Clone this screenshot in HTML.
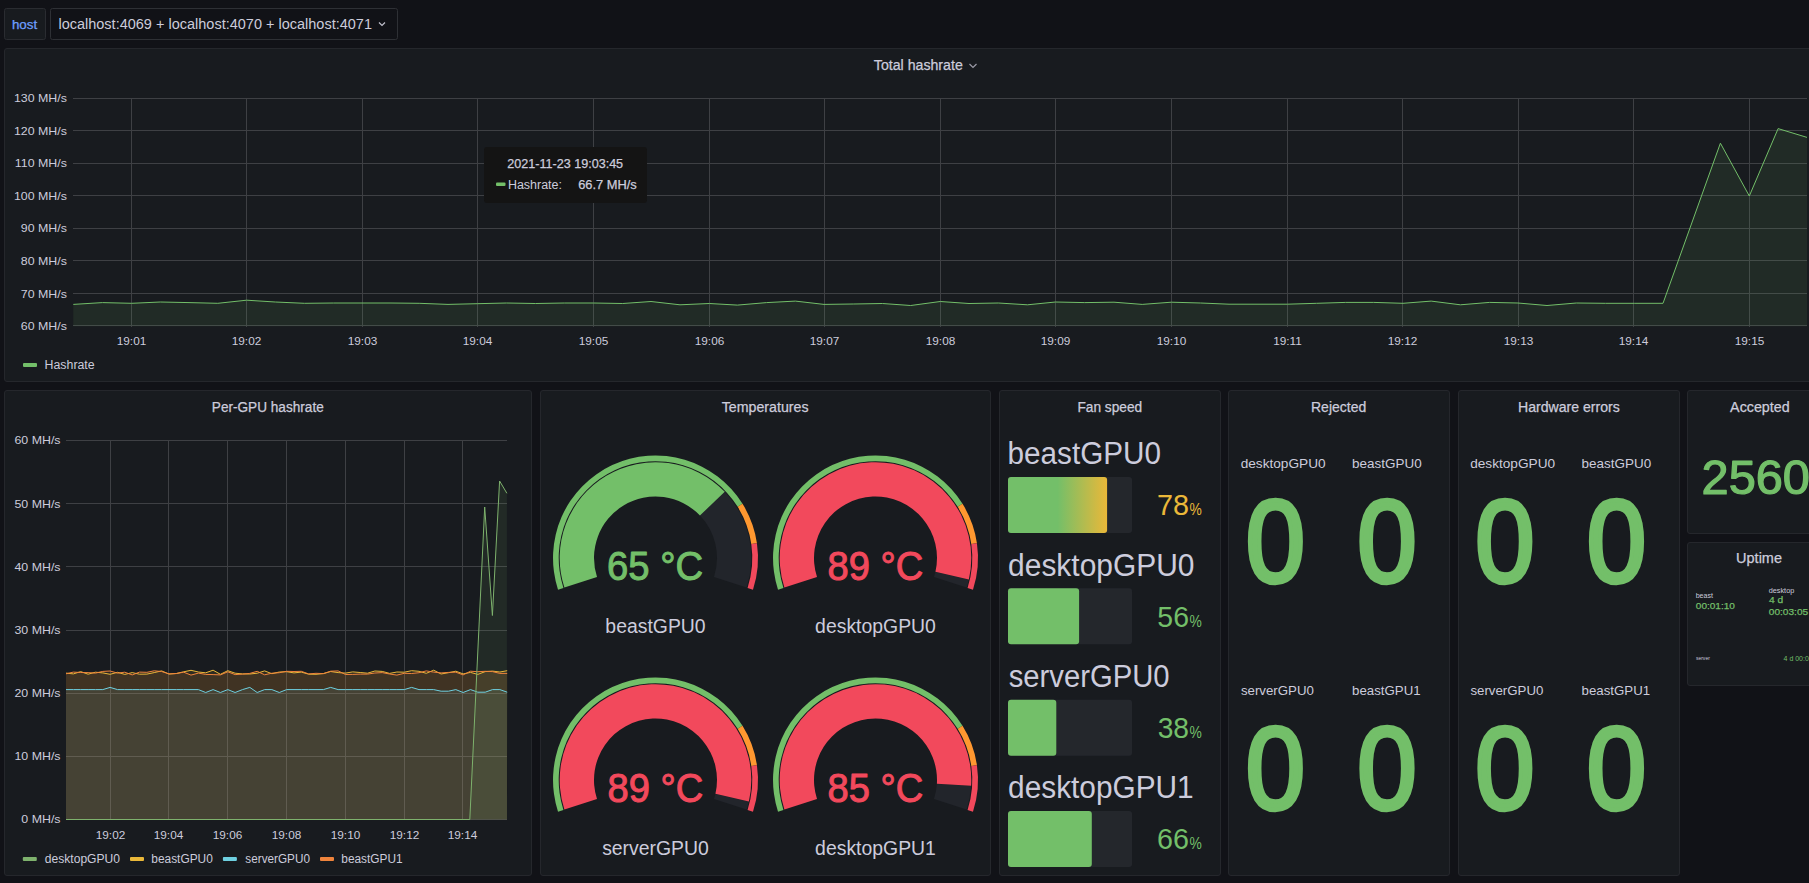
<!DOCTYPE html>
<html><head><meta charset="utf-8"><title>Grafana</title>
<style>html,body{margin:0;padding:0;background:#111217;overflow:hidden;width:1809px;height:883px}svg{display:block}text{font-family:"Liberation Sans", sans-serif}</style>
</head><body>
<svg width="1809" height="883" viewBox="0 0 1809 883">
<defs><linearGradient id="fg" x1="0" x2="1" y1="0" y2="0"><stop offset="0" stop-color="#73bf69"/><stop offset="0.5" stop-color="#73bf69"/><stop offset="1" stop-color="#eab839"/></linearGradient></defs>
<rect width="1809" height="883" fill="#111217"/>
<rect x="4.5" y="8.5" width="41" height="31" rx="2" fill="#181b1f" stroke="#2a2c31"/>
<rect x="50.5" y="8.5" width="347" height="31" rx="2" fill="#111217" stroke="#2e3035"/>
<polyline points="379,22.5 382,25.5 385,22.5" fill="none" stroke="#c0c0cc" stroke-width="1.2"/>
<rect x="4.5" y="48.5" width="1895.5" height="333.0" rx="2.5" fill="#181b1f" stroke="#25272c" stroke-width="1"/>
<polyline points="969.5,64 973,67.5 976.5,64" fill="none" stroke="#9a9aa6" stroke-width="1.2"/>
<line x1="73" y1="98.50" x2="1807" y2="98.50" stroke="#3e4044"/>
<line x1="73" y1="130.50" x2="1807" y2="130.50" stroke="#3e4044"/>
<line x1="73" y1="163.50" x2="1807" y2="163.50" stroke="#3e4044"/>
<line x1="73" y1="195.50" x2="1807" y2="195.50" stroke="#3e4044"/>
<line x1="73" y1="228.50" x2="1807" y2="228.50" stroke="#3e4044"/>
<line x1="73" y1="260.50" x2="1807" y2="260.50" stroke="#3e4044"/>
<line x1="73" y1="293.50" x2="1807" y2="293.50" stroke="#3e4044"/>
<line x1="73" y1="325.50" x2="1807" y2="325.50" stroke="#3e4044"/>
<line x1="131.50" y1="98" x2="131.50" y2="327" stroke="#3e4044"/>
<line x1="246.50" y1="98" x2="246.50" y2="327" stroke="#3e4044"/>
<line x1="362.50" y1="98" x2="362.50" y2="327" stroke="#3e4044"/>
<line x1="477.50" y1="98" x2="477.50" y2="327" stroke="#3e4044"/>
<line x1="593.50" y1="98" x2="593.50" y2="327" stroke="#3e4044"/>
<line x1="709.50" y1="98" x2="709.50" y2="327" stroke="#3e4044"/>
<line x1="824.50" y1="98" x2="824.50" y2="327" stroke="#3e4044"/>
<line x1="940.50" y1="98" x2="940.50" y2="327" stroke="#3e4044"/>
<line x1="1055.50" y1="98" x2="1055.50" y2="327" stroke="#3e4044"/>
<line x1="1171.50" y1="98" x2="1171.50" y2="327" stroke="#3e4044"/>
<line x1="1287.50" y1="98" x2="1287.50" y2="327" stroke="#3e4044"/>
<line x1="1402.50" y1="98" x2="1402.50" y2="327" stroke="#3e4044"/>
<line x1="1518.50" y1="98" x2="1518.50" y2="327" stroke="#3e4044"/>
<line x1="1633.50" y1="98" x2="1633.50" y2="327" stroke="#3e4044"/>
<line x1="1749.50" y1="98" x2="1749.50" y2="327" stroke="#3e4044"/>
<path d="M73.3,304.4 L102.5,302.6 L131.7,303.3 L160.3,302.0 L189.0,302.6 L217.8,303.3 L246.6,300.2 L275.3,302.0 L304.5,303.3 L333.7,303.0 L363.0,303.0 L391.0,303.0 L419.2,303.3 L448.0,304.4 L477.2,303.7 L506.4,303.0 L535.4,303.5 L564.3,303.0 L593.5,303.0 L622.7,303.5 L651.0,301.5 L680.0,304.8 L709.3,303.5 L737.4,305.1 L766.6,302.6 L795.4,301.1 L824.0,304.4 L853.2,304.0 L882.4,303.5 L910.7,305.5 L940.3,301.5 L969.0,303.5 L998.3,303.0 L1027.5,304.8 L1055.5,302.0 L1084.7,302.6 L1114.0,302.2 L1142.2,304.4 L1171.4,302.2 L1200.6,303.0 L1229.0,304.2 L1258.0,304.2 L1287.3,304.2 L1316.5,303.3 L1345.7,302.4 L1373.7,302.4 L1403.0,303.3 L1431.2,301.1 L1460.4,304.8 L1489.6,302.4 L1517.9,303.0 L1547.0,305.5 L1576.3,303.0 L1605.5,303.3 L1634.7,303.3 L1663.0,303.3 L1720.4,143.2 L1749.3,196.0 L1778.1,128.6 L1807.0,137.4 L1807,326.3 L73.3,326.3 Z" fill="#73bf69" fill-opacity="0.1"/>
<path d="M73.3,304.4 L102.5,302.6 L131.7,303.3 L160.3,302.0 L189.0,302.6 L217.8,303.3 L246.6,300.2 L275.3,302.0 L304.5,303.3 L333.7,303.0 L363.0,303.0 L391.0,303.0 L419.2,303.3 L448.0,304.4 L477.2,303.7 L506.4,303.0 L535.4,303.5 L564.3,303.0 L593.5,303.0 L622.7,303.5 L651.0,301.5 L680.0,304.8 L709.3,303.5 L737.4,305.1 L766.6,302.6 L795.4,301.1 L824.0,304.4 L853.2,304.0 L882.4,303.5 L910.7,305.5 L940.3,301.5 L969.0,303.5 L998.3,303.0 L1027.5,304.8 L1055.5,302.0 L1084.7,302.6 L1114.0,302.2 L1142.2,304.4 L1171.4,302.2 L1200.6,303.0 L1229.0,304.2 L1258.0,304.2 L1287.3,304.2 L1316.5,303.3 L1345.7,302.4 L1373.7,302.4 L1403.0,303.3 L1431.2,301.1 L1460.4,304.8 L1489.6,302.4 L1517.9,303.0 L1547.0,305.5 L1576.3,303.0 L1605.5,303.3 L1634.7,303.3 L1663.0,303.3 L1720.4,143.2 L1749.3,196.0 L1778.1,128.6 L1807.0,137.4" fill="none" stroke="#73bf69" stroke-width="1"/>
<rect x="23" y="363" width="14" height="4" rx="1" fill="#73bf69"/>
<rect x="484" y="147" width="163" height="56" rx="3" fill="#141414"/>
<rect x="496" y="182.5" width="9.5" height="3.5" rx="1" fill="#73bf69"/>
<rect x="4.5" y="390.5" width="527.0" height="485.0" rx="2.5" fill="#181b1f" stroke="#25272c" stroke-width="1"/>
<rect x="540.5" y="390.5" width="450.0" height="485.0" rx="2.5" fill="#181b1f" stroke="#25272c" stroke-width="1"/>
<rect x="999.5" y="390.5" width="221.0" height="485.0" rx="2.5" fill="#181b1f" stroke="#25272c" stroke-width="1"/>
<rect x="1228.5" y="390.5" width="221.0" height="485.0" rx="2.5" fill="#181b1f" stroke="#25272c" stroke-width="1"/>
<rect x="1458.5" y="390.5" width="221.0" height="485.0" rx="2.5" fill="#181b1f" stroke="#25272c" stroke-width="1"/>
<rect x="1687.5" y="390.5" width="212.5" height="143.0" rx="2.5" fill="#181b1f" stroke="#25272c" stroke-width="1"/>
<rect x="1687.5" y="542.5" width="212.5" height="143.0" rx="2.5" fill="#181b1f" stroke="#25272c" stroke-width="1"/>
<line x1="66" y1="440.50" x2="507" y2="440.50" stroke="#3e4044"/>
<line x1="66" y1="503.50" x2="507" y2="503.50" stroke="#3e4044"/>
<line x1="66" y1="566.50" x2="507" y2="566.50" stroke="#3e4044"/>
<line x1="66" y1="630.50" x2="507" y2="630.50" stroke="#3e4044"/>
<line x1="66" y1="693.50" x2="507" y2="693.50" stroke="#3e4044"/>
<line x1="66" y1="756.50" x2="507" y2="756.50" stroke="#3e4044"/>
<line x1="66" y1="819.50" x2="507" y2="819.50" stroke="#3e4044"/>
<line x1="110.50" y1="440" x2="110.50" y2="820" stroke="#3e4044"/>
<line x1="168.50" y1="440" x2="168.50" y2="820" stroke="#3e4044"/>
<line x1="227.50" y1="440" x2="227.50" y2="820" stroke="#3e4044"/>
<line x1="286.50" y1="440" x2="286.50" y2="820" stroke="#3e4044"/>
<line x1="345.50" y1="440" x2="345.50" y2="820" stroke="#3e4044"/>
<line x1="404.50" y1="440" x2="404.50" y2="820" stroke="#3e4044"/>
<line x1="462.50" y1="440" x2="462.50" y2="820" stroke="#3e4044"/>
<path d="M66.0,673.1 L73.4,673.9 L80.7,671.6 L88.1,674.2 L95.4,672.2 L102.8,672.9 L110.1,674.3 L117.5,672.3 L124.8,674.4 L132.2,672.6 L139.5,674.2 L146.9,674.1 L154.2,672.6 L161.6,670.9 L169.0,674.0 L176.3,673.5 L183.7,671.8 L191.0,670.3 L198.4,672.0 L205.7,672.8 L213.1,670.2 L220.4,674.3 L227.8,670.7 L235.1,673.2 L242.5,673.9 L249.8,674.0 L257.2,673.2 L264.6,670.9 L271.9,673.7 L279.3,672.0 L286.6,671.7 L294.0,672.9 L301.3,672.1 L308.7,674.2 L316.0,674.3 L323.4,673.6 L330.7,671.5 L338.1,672.6 L345.5,673.1 L352.8,671.9 L360.2,672.5 L367.5,673.2 L374.9,671.0 L382.2,671.4 L389.6,673.4 L396.9,672.0 L404.3,672.2 L411.6,670.7 L419.0,671.3 L426.3,673.3 L433.7,670.2 L441.1,674.0 L448.4,672.7 L455.8,671.2 L463.1,673.9 L470.5,672.4 L477.8,674.4 L485.2,671.6 L492.5,671.1 L499.9,672.0 L507.2,670.7 L507,819.5 L66,819.5 Z" fill="#eab839" fill-opacity="0.1"/>
<path d="M66.0,689.6 L73.4,689.6 L80.7,689.6 L88.1,689.6 L95.4,689.6 L102.8,689.6 L110.1,687.4 L117.5,689.6 L124.8,689.6 L132.2,689.6 L139.5,689.6 L146.9,689.6 L154.2,689.6 L161.6,689.6 L169.0,689.6 L176.3,689.6 L183.7,689.6 L191.0,689.6 L198.4,689.6 L205.7,692.5 L213.1,689.6 L220.4,692.5 L227.8,689.6 L235.1,692.5 L242.5,689.6 L249.8,687.4 L257.2,692.5 L264.6,689.6 L271.9,689.6 L279.3,692.5 L286.6,689.6 L294.0,689.6 L301.3,689.6 L308.7,689.6 L316.0,689.6 L323.4,689.6 L330.7,687.4 L338.1,689.6 L345.5,689.6 L352.8,689.6 L360.2,689.6 L367.5,689.6 L374.9,689.6 L382.2,689.6 L389.6,689.6 L396.9,689.6 L404.3,689.6 L411.6,687.4 L419.0,689.6 L426.3,689.6 L433.7,689.6 L441.1,691.2 L448.4,691.2 L455.8,689.6 L463.1,692.5 L470.5,689.6 L477.8,692.2 L485.2,692.2 L492.5,689.6 L499.9,689.6 L507.2,692.2 L507,819.5 L66,819.5 Z" fill="#6ed0e0" fill-opacity="0.1"/>
<path d="M66.0,673.8 L73.4,672.1 L80.7,672.5 L88.1,672.6 L95.4,673.1 L102.8,671.4 L110.1,671.0 L117.5,673.1 L124.8,672.2 L132.2,674.9 L139.5,672.1 L146.9,672.3 L154.2,670.8 L161.6,671.5 L169.0,673.9 L176.3,673.5 L183.7,672.2 L191.0,675.1 L198.4,673.1 L205.7,674.4 L213.1,674.6 L220.4,674.9 L227.8,671.8 L235.1,674.6 L242.5,674.1 L249.8,673.4 L257.2,671.3 L264.6,674.8 L271.9,673.2 L279.3,672.7 L286.6,671.3 L294.0,671.5 L301.3,671.3 L308.7,673.9 L316.0,673.3 L323.4,673.6 L330.7,671.2 L338.1,670.9 L345.5,674.5 L352.8,674.4 L360.2,674.1 L367.5,674.1 L374.9,673.0 L382.2,672.6 L389.6,674.0 L396.9,675.1 L404.3,673.3 L411.6,673.5 L419.0,672.7 L426.3,670.9 L433.7,672.1 L441.1,672.9 L448.4,672.4 L455.8,672.2 L463.1,674.9 L470.5,671.2 L477.8,671.7 L485.2,671.3 L492.5,671.6 L499.9,673.4 L507.2,673.4 L507,819.5 L66,819.5 Z" fill="#ef843c" fill-opacity="0.1"/>
<path d="M66.0,819.5 L469.8,819.5 L484.7,507.0 L492.4,615.5 L499.6,481.0 L506.9,493.3 L506.9,819.5 Z" fill="#7eb26d" fill-opacity="0.1"/>
<path d="M66.0,673.1 L73.4,673.9 L80.7,671.6 L88.1,674.2 L95.4,672.2 L102.8,672.9 L110.1,674.3 L117.5,672.3 L124.8,674.4 L132.2,672.6 L139.5,674.2 L146.9,674.1 L154.2,672.6 L161.6,670.9 L169.0,674.0 L176.3,673.5 L183.7,671.8 L191.0,670.3 L198.4,672.0 L205.7,672.8 L213.1,670.2 L220.4,674.3 L227.8,670.7 L235.1,673.2 L242.5,673.9 L249.8,674.0 L257.2,673.2 L264.6,670.9 L271.9,673.7 L279.3,672.0 L286.6,671.7 L294.0,672.9 L301.3,672.1 L308.7,674.2 L316.0,674.3 L323.4,673.6 L330.7,671.5 L338.1,672.6 L345.5,673.1 L352.8,671.9 L360.2,672.5 L367.5,673.2 L374.9,671.0 L382.2,671.4 L389.6,673.4 L396.9,672.0 L404.3,672.2 L411.6,670.7 L419.0,671.3 L426.3,673.3 L433.7,670.2 L441.1,674.0 L448.4,672.7 L455.8,671.2 L463.1,673.9 L470.5,672.4 L477.8,674.4 L485.2,671.6 L492.5,671.1 L499.9,672.0 L507.2,670.7" fill="none" stroke="#eab839" stroke-width="1"/>
<path d="M66.0,689.6 L73.4,689.6 L80.7,689.6 L88.1,689.6 L95.4,689.6 L102.8,689.6 L110.1,687.4 L117.5,689.6 L124.8,689.6 L132.2,689.6 L139.5,689.6 L146.9,689.6 L154.2,689.6 L161.6,689.6 L169.0,689.6 L176.3,689.6 L183.7,689.6 L191.0,689.6 L198.4,689.6 L205.7,692.5 L213.1,689.6 L220.4,692.5 L227.8,689.6 L235.1,692.5 L242.5,689.6 L249.8,687.4 L257.2,692.5 L264.6,689.6 L271.9,689.6 L279.3,692.5 L286.6,689.6 L294.0,689.6 L301.3,689.6 L308.7,689.6 L316.0,689.6 L323.4,689.6 L330.7,687.4 L338.1,689.6 L345.5,689.6 L352.8,689.6 L360.2,689.6 L367.5,689.6 L374.9,689.6 L382.2,689.6 L389.6,689.6 L396.9,689.6 L404.3,689.6 L411.6,687.4 L419.0,689.6 L426.3,689.6 L433.7,689.6 L441.1,691.2 L448.4,691.2 L455.8,689.6 L463.1,692.5 L470.5,689.6 L477.8,692.2 L485.2,692.2 L492.5,689.6 L499.9,689.6 L507.2,692.2" fill="none" stroke="#6ed0e0" stroke-width="1"/>
<path d="M66.0,673.8 L73.4,672.1 L80.7,672.5 L88.1,672.6 L95.4,673.1 L102.8,671.4 L110.1,671.0 L117.5,673.1 L124.8,672.2 L132.2,674.9 L139.5,672.1 L146.9,672.3 L154.2,670.8 L161.6,671.5 L169.0,673.9 L176.3,673.5 L183.7,672.2 L191.0,675.1 L198.4,673.1 L205.7,674.4 L213.1,674.6 L220.4,674.9 L227.8,671.8 L235.1,674.6 L242.5,674.1 L249.8,673.4 L257.2,671.3 L264.6,674.8 L271.9,673.2 L279.3,672.7 L286.6,671.3 L294.0,671.5 L301.3,671.3 L308.7,673.9 L316.0,673.3 L323.4,673.6 L330.7,671.2 L338.1,670.9 L345.5,674.5 L352.8,674.4 L360.2,674.1 L367.5,674.1 L374.9,673.0 L382.2,672.6 L389.6,674.0 L396.9,675.1 L404.3,673.3 L411.6,673.5 L419.0,672.7 L426.3,670.9 L433.7,672.1 L441.1,672.9 L448.4,672.4 L455.8,672.2 L463.1,674.9 L470.5,671.2 L477.8,671.7 L485.2,671.3 L492.5,671.6 L499.9,673.4 L507.2,673.4" fill="none" stroke="#ef843c" stroke-width="1"/>
<path d="M66.0,819.5 L469.8,819.5 L484.7,507.0 L492.4,615.5 L499.6,481.0 L506.9,493.3" fill="none" stroke="#7eb26d" stroke-width="1"/>
<rect x="22.8" y="857" width="14" height="4" rx="1" fill="#7eb26d"/>
<rect x="130" y="857" width="14" height="4" rx="1" fill="#eab839"/>
<rect x="222.9" y="857" width="14" height="4" rx="1" fill="#6ed0e0"/>
<rect x="320" y="857" width="14" height="4" rx="1" fill="#ef843c"/>
<path d="M558.02,589.67 A102.5,102.5 0 0 1 742.52,503.84 L737.68,506.85 A96.8,96.8 0 0 0 563.44,587.91 Z" fill="#73bf69"/>
<path d="M742.52,503.84 A102.5,102.5 0 0 1 756.93,543.20 L751.29,544.03 A96.8,96.8 0 0 0 737.68,506.85 Z" fill="#ff9830"/>
<path d="M756.93,543.20 A102.5,102.5 0 0 1 752.98,589.67 L747.56,587.91 A96.8,96.8 0 0 0 751.29,544.03 Z" fill="#f2495c"/>
<path d="M724.76,491.81 A95.8,95.8 0 0 1 746.61,587.60 L713.99,577.00 A61.5,61.5 0 0 0 699.96,515.51 Z" fill="#22252b"/>
<path d="M564.39,587.60 A95.8,95.8 0 0 1 724.76,491.81 L699.96,515.51 A61.5,61.5 0 0 0 597.01,577.00 Z" fill="#73bf69"/>
<path d="M778.02,589.67 A102.5,102.5 0 0 1 962.52,503.84 L957.68,506.85 A96.8,96.8 0 0 0 783.44,587.91 Z" fill="#73bf69"/>
<path d="M962.52,503.84 A102.5,102.5 0 0 1 976.93,543.20 L971.29,544.03 A96.8,96.8 0 0 0 957.68,506.85 Z" fill="#ff9830"/>
<path d="M976.93,543.20 A102.5,102.5 0 0 1 972.98,589.67 L967.56,587.91 A96.8,96.8 0 0 0 971.29,544.03 Z" fill="#f2495c"/>
<path d="M968.87,579.45 A95.8,95.8 0 0 1 966.61,587.60 L933.99,577.00 A61.5,61.5 0 0 0 935.44,571.77 Z" fill="#22252b"/>
<path d="M784.39,587.60 A95.8,95.8 0 1 1 968.87,579.45 L935.44,571.77 A61.5,61.5 0 1 0 817.01,577.00 Z" fill="#f2495c"/>
<path d="M558.02,811.67 A102.5,102.5 0 0 1 742.52,725.84 L737.68,728.85 A96.8,96.8 0 0 0 563.44,809.91 Z" fill="#73bf69"/>
<path d="M742.52,725.84 A102.5,102.5 0 0 1 756.93,765.20 L751.29,766.03 A96.8,96.8 0 0 0 737.68,728.85 Z" fill="#ff9830"/>
<path d="M756.93,765.20 A102.5,102.5 0 0 1 752.98,811.67 L747.56,809.91 A96.8,96.8 0 0 0 751.29,766.03 Z" fill="#f2495c"/>
<path d="M748.87,801.45 A95.8,95.8 0 0 1 746.61,809.60 L713.99,799.00 A61.5,61.5 0 0 0 715.44,793.77 Z" fill="#22252b"/>
<path d="M564.39,809.60 A95.8,95.8 0 1 1 748.87,801.45 L715.44,793.77 A61.5,61.5 0 1 0 597.01,799.00 Z" fill="#f2495c"/>
<path d="M778.02,811.67 A102.5,102.5 0 0 1 962.52,725.84 L957.68,728.85 A96.8,96.8 0 0 0 783.44,809.91 Z" fill="#73bf69"/>
<path d="M962.52,725.84 A102.5,102.5 0 0 1 976.93,765.20 L971.29,766.03 A96.8,96.8 0 0 0 957.68,728.85 Z" fill="#ff9830"/>
<path d="M976.93,765.20 A102.5,102.5 0 0 1 972.98,811.67 L967.56,809.91 A96.8,96.8 0 0 0 971.29,766.03 Z" fill="#f2495c"/>
<path d="M971.12,785.85 A95.8,95.8 0 0 1 966.61,809.60 L933.99,799.00 A61.5,61.5 0 0 0 936.89,783.75 Z" fill="#22252b"/>
<path d="M784.39,809.60 A95.8,95.8 0 1 1 971.12,785.85 L936.89,783.75 A61.5,61.5 0 1 0 817.01,799.00 Z" fill="#f2495c"/>
<rect x="1008" y="477.00" width="124" height="56" rx="3" fill="rgba(204,204,220,0.07)"/>
<rect x="1008" y="477.00" width="99.1" height="56" rx="3" fill="url(#fg)"/>
<rect x="1008" y="588.33" width="124" height="56" rx="3" fill="rgba(204,204,220,0.07)"/>
<rect x="1008" y="588.33" width="71.1" height="56" rx="3" fill="#73bf69"/>
<rect x="1008" y="699.66" width="124" height="56" rx="3" fill="rgba(204,204,220,0.07)"/>
<rect x="1008" y="699.66" width="48.3" height="56" rx="3" fill="#73bf69"/>
<rect x="1008" y="810.99" width="124" height="56" rx="3" fill="rgba(204,204,220,0.07)"/>
<rect x="1008" y="810.99" width="83.8" height="56" rx="3" fill="#73bf69"/>
<text x="11.92" y="29.00" font-size="12.00" fill="#6e9fff" stroke="#6e9fff" stroke-width="0.25" stroke-linejoin="round" textLength="25.22" lengthAdjust="spacingAndGlyphs">host</text>
<text x="58.43" y="29.40" font-size="14.00" fill="#ccccdc" textLength="313.54" lengthAdjust="spacingAndGlyphs">localhost:4069 + localhost:4070 + localhost:4071</text>
<text x="873.84" y="69.50" font-size="14.00" fill="#ccccdc" stroke="#ccccdc" stroke-width="0.25" stroke-linejoin="round" textLength="88.95" lengthAdjust="spacingAndGlyphs">Total hashrate</text>
<text x="13.95" y="102.00" font-size="11.80" fill="#ccccdc" textLength="53.02" lengthAdjust="spacingAndGlyphs">130 MH/s</text>
<text x="13.95" y="135.00" font-size="11.80" fill="#ccccdc" textLength="53.02" lengthAdjust="spacingAndGlyphs">120 MH/s</text>
<text x="14.87" y="167.00" font-size="11.80" fill="#ccccdc" textLength="52.10" lengthAdjust="spacingAndGlyphs">110 MH/s</text>
<text x="13.95" y="200.00" font-size="11.80" fill="#ccccdc" textLength="53.02" lengthAdjust="spacingAndGlyphs">100 MH/s</text>
<text x="20.84" y="232.00" font-size="11.80" fill="#ccccdc" textLength="46.13" lengthAdjust="spacingAndGlyphs">90 MH/s</text>
<text x="20.84" y="265.00" font-size="11.80" fill="#ccccdc" textLength="46.13" lengthAdjust="spacingAndGlyphs">80 MH/s</text>
<text x="20.84" y="298.00" font-size="11.80" fill="#ccccdc" textLength="46.13" lengthAdjust="spacingAndGlyphs">70 MH/s</text>
<text x="20.84" y="330.00" font-size="11.80" fill="#ccccdc" textLength="46.13" lengthAdjust="spacingAndGlyphs">60 MH/s</text>
<text x="131.50" y="345.00" font-size="11.80" fill="#ccccdc" text-anchor="middle">19:01</text>
<text x="246.50" y="345.00" font-size="11.80" fill="#ccccdc" text-anchor="middle">19:02</text>
<text x="362.50" y="345.00" font-size="11.80" fill="#ccccdc" text-anchor="middle">19:03</text>
<text x="477.50" y="345.00" font-size="11.80" fill="#ccccdc" text-anchor="middle">19:04</text>
<text x="593.50" y="345.00" font-size="11.80" fill="#ccccdc" text-anchor="middle">19:05</text>
<text x="709.50" y="345.00" font-size="11.80" fill="#ccccdc" text-anchor="middle">19:06</text>
<text x="824.50" y="345.00" font-size="11.80" fill="#ccccdc" text-anchor="middle">19:07</text>
<text x="940.50" y="345.00" font-size="11.80" fill="#ccccdc" text-anchor="middle">19:08</text>
<text x="1055.50" y="345.00" font-size="11.80" fill="#ccccdc" text-anchor="middle">19:09</text>
<text x="1171.50" y="345.00" font-size="11.80" fill="#ccccdc" text-anchor="middle">19:10</text>
<text x="1287.50" y="345.00" font-size="11.80" fill="#ccccdc" text-anchor="middle">19:11</text>
<text x="1402.50" y="345.00" font-size="11.80" fill="#ccccdc" text-anchor="middle">19:12</text>
<text x="1518.50" y="345.00" font-size="11.80" fill="#ccccdc" text-anchor="middle">19:13</text>
<text x="1633.50" y="345.00" font-size="11.80" fill="#ccccdc" text-anchor="middle">19:14</text>
<text x="1749.50" y="345.00" font-size="11.80" fill="#ccccdc" text-anchor="middle">19:15</text>
<text x="44.61" y="369.00" font-size="12.00" fill="#ccccdc" textLength="50.03" lengthAdjust="spacingAndGlyphs">Hashrate</text>
<text x="507.30" y="167.80" font-size="12.00" fill="#ccccdc" stroke="#ccccdc" stroke-width="0.25" stroke-linejoin="round" textLength="115.83" lengthAdjust="spacingAndGlyphs">2021-11-23 19:03:45</text>
<text x="507.90" y="188.80" font-size="12.00" fill="#ccccdc" textLength="54.09" lengthAdjust="spacingAndGlyphs">Hashrate:</text>
<text x="578.18" y="188.80" font-size="12.00" fill="#ccccdc" stroke="#ccccdc" stroke-width="0.25" stroke-linejoin="round" textLength="58.58" lengthAdjust="spacingAndGlyphs">66.7 MH/s</text>
<text x="211.84" y="411.60" font-size="14.00" fill="#ccccdc" stroke="#ccccdc" stroke-width="0.25" stroke-linejoin="round" textLength="111.93" lengthAdjust="spacingAndGlyphs">Per-GPU hashrate</text>
<text x="721.74" y="411.60" font-size="14.00" fill="#ccccdc" stroke="#ccccdc" stroke-width="0.25" stroke-linejoin="round" textLength="86.76" lengthAdjust="spacingAndGlyphs">Temperatures</text>
<text x="1077.43" y="411.60" font-size="14.00" fill="#ccccdc" stroke="#ccccdc" stroke-width="0.25" stroke-linejoin="round" textLength="64.82" lengthAdjust="spacingAndGlyphs">Fan speed</text>
<text x="1311.00" y="411.60" font-size="14.00" fill="#ccccdc" stroke="#ccccdc" stroke-width="0.25" stroke-linejoin="round" textLength="55.26" lengthAdjust="spacingAndGlyphs">Rejected</text>
<text x="1518.00" y="411.60" font-size="14.00" fill="#ccccdc" stroke="#ccccdc" stroke-width="0.25" stroke-linejoin="round" textLength="101.80" lengthAdjust="spacingAndGlyphs">Hardware errors</text>
<text x="1730.12" y="411.60" font-size="14.00" fill="#ccccdc" stroke="#ccccdc" stroke-width="0.25" stroke-linejoin="round" textLength="59.55" lengthAdjust="spacingAndGlyphs">Accepted</text>
<text x="1736.11" y="563.20" font-size="14.00" fill="#ccccdc" stroke="#ccccdc" stroke-width="0.25" stroke-linejoin="round" textLength="45.89" lengthAdjust="spacingAndGlyphs">Uptime</text>
<text x="14.44" y="444.00" font-size="11.80" fill="#ccccdc" textLength="46.13" lengthAdjust="spacingAndGlyphs">60 MH/s</text>
<text x="14.44" y="508.00" font-size="11.80" fill="#ccccdc" textLength="46.13" lengthAdjust="spacingAndGlyphs">50 MH/s</text>
<text x="14.44" y="571.00" font-size="11.80" fill="#ccccdc" textLength="46.13" lengthAdjust="spacingAndGlyphs">40 MH/s</text>
<text x="14.44" y="634.00" font-size="11.80" fill="#ccccdc" textLength="46.13" lengthAdjust="spacingAndGlyphs">30 MH/s</text>
<text x="14.44" y="697.00" font-size="11.80" fill="#ccccdc" textLength="46.13" lengthAdjust="spacingAndGlyphs">20 MH/s</text>
<text x="14.44" y="760.00" font-size="11.80" fill="#ccccdc" textLength="46.13" lengthAdjust="spacingAndGlyphs">10 MH/s</text>
<text x="21.33" y="823.00" font-size="11.80" fill="#ccccdc" textLength="39.24" lengthAdjust="spacingAndGlyphs">0 MH/s</text>
<text x="110.50" y="839.30" font-size="11.80" fill="#ccccdc" text-anchor="middle">19:02</text>
<text x="168.50" y="839.30" font-size="11.80" fill="#ccccdc" text-anchor="middle">19:04</text>
<text x="227.50" y="839.30" font-size="11.80" fill="#ccccdc" text-anchor="middle">19:06</text>
<text x="286.50" y="839.30" font-size="11.80" fill="#ccccdc" text-anchor="middle">19:08</text>
<text x="345.50" y="839.30" font-size="11.80" fill="#ccccdc" text-anchor="middle">19:10</text>
<text x="404.50" y="839.30" font-size="11.80" fill="#ccccdc" text-anchor="middle">19:12</text>
<text x="462.50" y="839.30" font-size="11.80" fill="#ccccdc" text-anchor="middle">19:14</text>
<text x="44.82" y="863.20" font-size="12.00" fill="#ccccdc" textLength="75.22" lengthAdjust="spacingAndGlyphs">desktopGPU0</text>
<text x="151.29" y="863.20" font-size="12.00" fill="#ccccdc" textLength="61.54" lengthAdjust="spacingAndGlyphs">beastGPU0</text>
<text x="245.37" y="863.20" font-size="12.00" fill="#ccccdc" textLength="64.56" lengthAdjust="spacingAndGlyphs">serverGPU0</text>
<text x="341.29" y="863.20" font-size="12.00" fill="#ccccdc" textLength="61.36" lengthAdjust="spacingAndGlyphs">beastGPU1</text>
<text x="607.09" y="580.29" font-size="40.70" fill="#73bf69" stroke="#73bf69" stroke-width="1.0" stroke-linejoin="round" textLength="96.14" lengthAdjust="spacingAndGlyphs">65 °C</text>
<text x="605.36" y="632.70" font-size="20.00" fill="#ccccdc" textLength="100.29" lengthAdjust="spacingAndGlyphs">beastGPU0</text>
<text x="827.48" y="580.29" font-size="40.70" fill="#f2495c" stroke="#f2495c" stroke-width="1.0" stroke-linejoin="round" textLength="95.75" lengthAdjust="spacingAndGlyphs">89 °C</text>
<text x="815.11" y="632.70" font-size="20.00" fill="#ccccdc" textLength="120.78" lengthAdjust="spacingAndGlyphs">desktopGPU0</text>
<text x="607.48" y="802.29" font-size="40.70" fill="#f2495c" stroke="#f2495c" stroke-width="1.0" stroke-linejoin="round" textLength="95.75" lengthAdjust="spacingAndGlyphs">89 °C</text>
<text x="602.14" y="854.70" font-size="20.00" fill="#ccccdc" textLength="106.73" lengthAdjust="spacingAndGlyphs">serverGPU0</text>
<text x="827.48" y="802.29" font-size="40.70" fill="#f2495c" stroke="#f2495c" stroke-width="1.0" stroke-linejoin="round" textLength="95.75" lengthAdjust="spacingAndGlyphs">85 °C</text>
<text x="815.11" y="854.70" font-size="20.00" fill="#ccccdc" textLength="120.78" lengthAdjust="spacingAndGlyphs">desktopGPU1</text>
<text x="1007.52" y="464.20" font-size="31.00" fill="#ccccdc" textLength="153.56" lengthAdjust="spacingAndGlyphs">beastGPU0</text>
<text x="1157.06" y="515.30" font-size="29.00" fill="#eab839" textLength="31.98" lengthAdjust="spacingAndGlyphs">78</text>
<text x="1189.58" y="515.30" font-size="16.00" fill="#eab839" textLength="12.32" lengthAdjust="spacingAndGlyphs">%</text>
<text x="1008.10" y="575.53" font-size="31.00" fill="#ccccdc" textLength="186.38" lengthAdjust="spacingAndGlyphs">desktopGPU0</text>
<text x="1157.36" y="626.63" font-size="29.00" fill="#73bf69" textLength="31.67" lengthAdjust="spacingAndGlyphs">56</text>
<text x="1189.58" y="626.63" font-size="16.00" fill="#73bf69" textLength="12.32" lengthAdjust="spacingAndGlyphs">%</text>
<text x="1008.71" y="686.86" font-size="31.00" fill="#ccccdc" textLength="160.94" lengthAdjust="spacingAndGlyphs">serverGPU0</text>
<text x="1157.65" y="737.96" font-size="29.00" fill="#73bf69" textLength="31.37" lengthAdjust="spacingAndGlyphs">38</text>
<text x="1189.58" y="737.96" font-size="16.00" fill="#73bf69" textLength="12.32" lengthAdjust="spacingAndGlyphs">%</text>
<text x="1008.11" y="798.19" font-size="31.00" fill="#ccccdc" textLength="185.57" lengthAdjust="spacingAndGlyphs">desktopGPU1</text>
<text x="1157.06" y="849.29" font-size="29.00" fill="#73bf69" textLength="31.98" lengthAdjust="spacingAndGlyphs">66</text>
<text x="1189.58" y="849.29" font-size="16.00" fill="#73bf69" textLength="12.32" lengthAdjust="spacingAndGlyphs">%</text>
<text x="1240.65" y="468.10" font-size="13.50" fill="#ccccdc" textLength="84.94" lengthAdjust="spacingAndGlyphs">desktopGPU0</text>
<text x="1352.09" y="468.10" font-size="13.50" fill="#ccccdc" textLength="69.59" lengthAdjust="spacingAndGlyphs">beastGPU0</text>
<text x="1245.75" y="581.58" font-size="117.46" fill="#73bf69" stroke="#73bf69" stroke-width="4.5" stroke-linejoin="round" textLength="59.25" lengthAdjust="spacingAndGlyphs">0</text>
<text x="1357.34" y="581.58" font-size="117.46" fill="#73bf69" stroke="#73bf69" stroke-width="4.5" stroke-linejoin="round" textLength="59.47" lengthAdjust="spacingAndGlyphs">0</text>
<text x="1240.93" y="694.80" font-size="13.50" fill="#ccccdc" textLength="72.94" lengthAdjust="spacingAndGlyphs">serverGPU0</text>
<text x="1352.10" y="694.80" font-size="13.50" fill="#ccccdc" textLength="68.51" lengthAdjust="spacingAndGlyphs">beastGPU1</text>
<text x="1245.75" y="809.18" font-size="117.46" fill="#73bf69" stroke="#73bf69" stroke-width="4.5" stroke-linejoin="round" textLength="59.25" lengthAdjust="spacingAndGlyphs">0</text>
<text x="1357.34" y="809.18" font-size="117.46" fill="#73bf69" stroke="#73bf69" stroke-width="4.5" stroke-linejoin="round" textLength="59.47" lengthAdjust="spacingAndGlyphs">0</text>
<text x="1470.15" y="468.10" font-size="13.50" fill="#ccccdc" textLength="84.94" lengthAdjust="spacingAndGlyphs">desktopGPU0</text>
<text x="1581.59" y="468.10" font-size="13.50" fill="#ccccdc" textLength="69.59" lengthAdjust="spacingAndGlyphs">beastGPU0</text>
<text x="1475.25" y="581.58" font-size="117.46" fill="#73bf69" stroke="#73bf69" stroke-width="4.5" stroke-linejoin="round" textLength="59.25" lengthAdjust="spacingAndGlyphs">0</text>
<text x="1586.84" y="581.58" font-size="117.46" fill="#73bf69" stroke="#73bf69" stroke-width="4.5" stroke-linejoin="round" textLength="59.47" lengthAdjust="spacingAndGlyphs">0</text>
<text x="1470.43" y="694.80" font-size="13.50" fill="#ccccdc" textLength="72.94" lengthAdjust="spacingAndGlyphs">serverGPU0</text>
<text x="1581.60" y="694.80" font-size="13.50" fill="#ccccdc" textLength="68.51" lengthAdjust="spacingAndGlyphs">beastGPU1</text>
<text x="1475.25" y="809.18" font-size="117.46" fill="#73bf69" stroke="#73bf69" stroke-width="4.5" stroke-linejoin="round" textLength="59.25" lengthAdjust="spacingAndGlyphs">0</text>
<text x="1586.84" y="809.18" font-size="117.46" fill="#73bf69" stroke="#73bf69" stroke-width="4.5" stroke-linejoin="round" textLength="59.47" lengthAdjust="spacingAndGlyphs">0</text>
<text x="1701.56" y="493.93" font-size="47.32" fill="#73bf69" stroke="#73bf69" stroke-width="1.2" stroke-linejoin="round" textLength="108.44" lengthAdjust="spacingAndGlyphs">2560</text>
<text x="1695.68" y="598.00" font-size="7.00" fill="#ccccdc" textLength="17.21" lengthAdjust="spacingAndGlyphs">beast</text>
<text x="1695.82" y="608.90" font-size="9.50" fill="#73bf69" stroke="#73bf69" stroke-width="0.25" stroke-linejoin="round" textLength="39.11" lengthAdjust="spacingAndGlyphs">00:01:10</text>
<text x="1768.71" y="593.40" font-size="7.00" fill="#ccccdc" textLength="25.56" lengthAdjust="spacingAndGlyphs">desktop</text>
<text x="1768.92" y="603.00" font-size="9.50" fill="#73bf69" stroke="#73bf69" stroke-width="0.25" stroke-linejoin="round" textLength="14.23" lengthAdjust="spacingAndGlyphs">4 d</text>
<text x="1768.82" y="614.90" font-size="9.50" fill="#73bf69" stroke="#73bf69" stroke-width="0.25" stroke-linejoin="round" textLength="39.32" lengthAdjust="spacingAndGlyphs">00:03:05</text>
<text x="1695.90" y="660.00" font-size="5.00" fill="#ccccdc" textLength="13.97" lengthAdjust="spacingAndGlyphs">server</text>
<text x="1783.56" y="661.00" font-size="7.00" fill="#73bf69">4 d 00:03:05</text>
</svg>
</body></html>
